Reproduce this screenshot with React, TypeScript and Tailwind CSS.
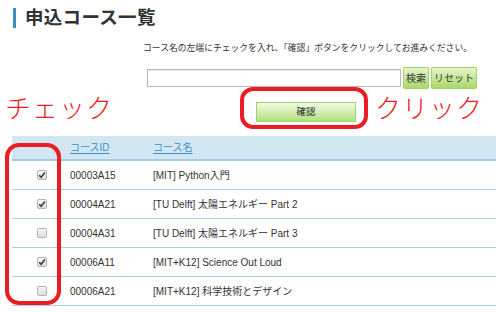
import React from "react";

const rows = [
  { id: "00003A15", name: "[MIT] Python入門", checked: true },
  { id: "00004A21", name: "[TU Delft] 太陽エネルギー Part 2", checked: true },
  { id: "00004A31", name: "[TU Delft] 太陽エネルギー Part 3", checked: false },
  { id: "00006A11", name: "[MIT+K12] Science Out Loud", checked: true },
  { id: "00006A21", name: "[MIT+K12] 科学技術とデザイン", checked: false },
];

function Box({ checked }: { checked: boolean }) {
  return (
    <div className="w-[10px] h-[10px] rounded-[2px] border border-[#b3b3b3] bg-gradient-to-b from-[#f6f6f6] to-[#dedede] flex items-center justify-center">
      {checked && (
        <svg width="8" height="8" viewBox="0 0 8 8">
          <path d="M1.2 4.3 L3.1 6.2 L6.9 1.6" fill="none" stroke="#3a3a3a" strokeWidth="1.6" />
        </svg>
      )}
    </div>
  );
}

export default function App() {
  const font = { fontFamily: '"Liberation Sans", "Noto Sans CJK JP", sans-serif' };
  return (
    <div className="relative w-[496px] h-[312px] overflow-hidden bg-white text-[#333]" style={font}>
      {/* Title */}
      <div className="flex items-center pt-[8px] pl-[13px]">
        <div className="w-[3px] h-[20px] bg-[#3b8dbd]" />
        <div className="ml-[9px] text-[18.5px] leading-[20px] font-bold text-[#333] tracking-[0.3px]">申込コース一覧</div>
      </div>

      {/* Instruction */}
      <div className="ml-[143px] mt-[14px] text-[8.8px] leading-[12px] text-[#333] whitespace-nowrap">
        コース名の左端にチェックを入れ、「確認」ボタンをクリックしてお進みください。
      </div>

      {/* Search row */}
      <div className="ml-[147px] mt-[13px] flex items-center gap-[2px]">
        <div className="w-[254px] h-[18px] border border-[#b8b8b8] bg-white shadow-[inset_0_1px_1px_rgba(0,0,0,0.08)]" />
        <div className="h-[22px] px-[2px] flex items-center border border-[#a6d36c] bg-gradient-to-b from-[#e6f6c8] to-[#a9d86a] text-[10px] text-[#333] rounded-[1px]">検索</div>
        <div className="h-[22px] px-[2px] flex items-center border border-[#a6d36c] bg-gradient-to-b from-[#e6f6c8] to-[#a9d86a] text-[10px] text-[#333] rounded-[1px]">リセット</div>
      </div>

      {/* Confirm button */}
      <div className="ml-[256px] mt-[13px] w-[100px] h-[20px] border border-[#a3d26c] bg-gradient-to-b from-[#f1fae3] to-[#b5e07c] flex items-center justify-center text-[9.5px] text-[#222]">
        確認
      </div>

      {/* Table */}
      <div className="ml-[12px] mt-[14px] text-[10px]">
        <div className="h-[25px] bg-[#d3e7f3] border-b-2 border-[#a4cde5] flex items-center">
          <div className="w-[58px]" />
          <div className="w-[83px] text-[#3f8fc8] underline underline-offset-2">コースID</div>
          <div className="text-[#3f8fc8] underline underline-offset-2">コース名</div>
        </div>
        {rows.map((r) => (
          <div key={r.id} className="h-[29px] border-b border-[#a9d0e6] flex items-center">
            <div className="w-[58px] flex justify-center pl-[2px]">
              <Box checked={r.checked} />
            </div>
            <div className="w-[83px] text-[#333]">{r.id}</div>
            <div className="text-[#333] whitespace-nowrap">{r.name}</div>
          </div>
        ))}
      </div>

      {/* Annotations */}
      <div className="absolute left-[5px] top-[92px] text-[26px] leading-[30px] text-[#ee1c25] tracking-[1px]" style={{ fontFamily: '"Noto Sans CJK JP", sans-serif', fontWeight: 300 }}>
        チェック
      </div>
      <div className="absolute left-[375px] top-[92px] text-[26px] leading-[30px] text-[#ee1c25] tracking-[1px]" style={{ fontFamily: '"Noto Sans CJK JP", sans-serif', fontWeight: 300 }}>
        クリック
      </div>
      <div className="absolute left-[240px] top-[87px] w-[128px] h-[42px] border-[4px] border-[#ec1c24] rounded-[13px]" />
      <div className="absolute left-[5px] top-[143px] w-[56px] h-[162px] border-[4px] border-[#ec1c24] rounded-[14px]" />
    </div>
  );
}
